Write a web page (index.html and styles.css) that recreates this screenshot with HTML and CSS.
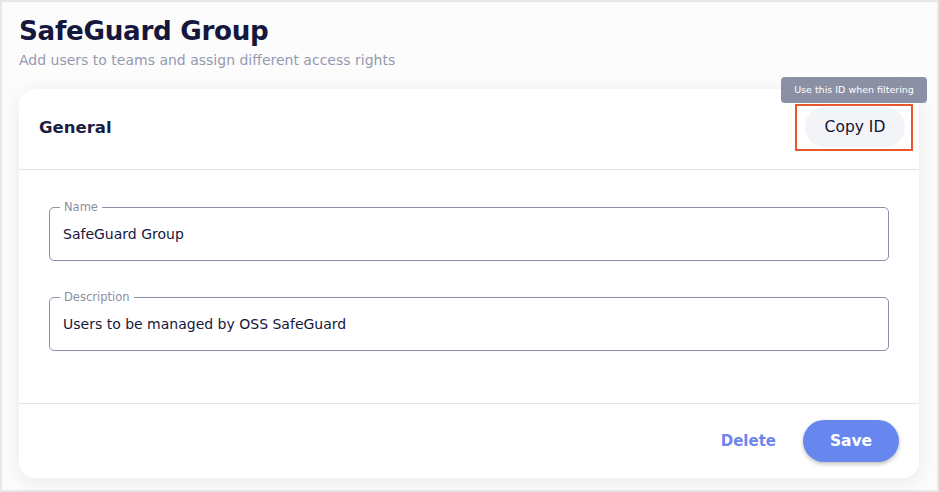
FILE: index.html
```html
<!DOCTYPE html>
<html lang="en">

<head>
    <meta charset="UTF-8">
    <meta name="viewport" content="width=device-width, initial-scale=1.0">
    <title>SafeGuard Group</title>
    <link rel="stylesheet" href="styles.css">
</head>

<body>
    <div class="frame">
        <h1 class="page-title">SafeGuard Group</h1>
        <p class="page-subtitle">Add users to teams and assign different access rights</p>

        <div class="card">
            <div class="card-header">
                <h2 class="card-title">General</h2>
                <div class="highlight">
                    <span class="tooltip">Use this ID when filtering</span>
                    <button class="btn-copy">Copy ID</button>
                </div>
            </div>

            <div class="card-body">
                <fieldset class="field">
                    <legend>Name</legend>
                    <input type="text" value="SafeGuard Group">
                </fieldset>
                <fieldset class="field">
                    <legend>Description</legend>
                    <input type="text" value="Users to be managed by OSS SafeGuard">
                </fieldset>
            </div>

            <div class="card-footer">
                <button class="btn-delete">Delete</button>
                <button class="btn-save">Save</button>
            </div>
        </div>
    </div>
</body>

</html>
```

FILE: styles.css
```css
* {
    box-sizing: border-box;
}

body {
    margin: 0;
    font-family: "DejaVu Sans", "Noto Sans", sans-serif;
    color: #15173d;
}

.frame {
    width: 939px;
    height: 492px;
    border: 2px solid #e8e8e8;
    background-color: #fcfcfc;
    padding: 12px 18px 0 17px;
}

.page-title {
    margin: 0;
    font-size: 26.2px;
    line-height: 34px;
    font-weight: bold;
    letter-spacing: -0.3px;
}

.page-subtitle {
    margin: 3px 0 0;
    font-size: 14px;
    line-height: 18px;
    color: #959ab0;
}

.card {
    margin-top: 20px;
    background-color: #fff;
    border-radius: 16px;
    box-shadow: 0 4px 22px rgba(0, 0, 0, 0.08);
}

.card-header {
    height: 81px;
    display: flex;
    justify-content: space-between;
    align-items: center;
    padding: 0 6px 4px 20px;
    border-bottom: 1px solid #e3e3e3;
}

.card-title {
    margin: 0;
    font-size: 16.5px;
    font-weight: 600;
    color: #1b1d42;
}

.highlight {
    position: relative;
    border: 2px solid #e8572c;
    padding: 1px 6px 2px 8px;
}

.tooltip {
    position: absolute;
    left: -16px;
    top: -29px;
    width: 146px;
    height: 26px;
    line-height: 26px;
    border-radius: 4px;
    background-color: #8b90a5;
    color: #fff;
    font-size: 9.5px;
    text-align: center;
    white-space: nowrap;
}

.btn-copy {
    width: 100px;
    height: 40px;
    border: none;
    border-radius: 20px;
    background-color: #f3f4f8;
    color: #101233;
    font-family: inherit;
    font-size: 15.5px;
}

.card-body {
    padding: 30px 30px 52px;
    border-bottom: 1px solid #e3e3e3;
}

.field {
    margin: 0;
    padding: 0 10px 10px;
    height: 61px;
    border: 1px solid #8b91a8;
    border-radius: 5px;
}

.field+.field {
    margin-top: 29px;
}

.field legend {
    padding: 0 4px;
    font-size: 11.5px;
    line-height: 14px;
    color: #8a8fa4;
}

.field input {
    width: 100%;
    height: 40px;
    border: none;
    outline: none;
    padding: 0 3px;
    font-family: inherit;
    font-size: 14px;
    color: #15173d;
    background: transparent;
}

.card-footer {
    height: 74px;
    display: flex;
    justify-content: flex-end;
    align-items: center;
    gap: 15px;
    padding: 0 20px;
}

.btn-delete {
    border: none;
    background: none;
    padding: 8px 12px;
    color: #6b86ee;
    font-family: inherit;
    font-size: 15px;
    font-weight: 600;
}

.btn-save {
    width: 96px;
    height: 42px;
    border: none;
    border-radius: 21px;
    background-color: #6787ef;
    color: #fff;
    font-family: inherit;
    font-size: 15.5px;
    font-weight: bold;
    box-shadow: 0 2px 4px rgba(0, 0, 0, 0.25);
}
```
